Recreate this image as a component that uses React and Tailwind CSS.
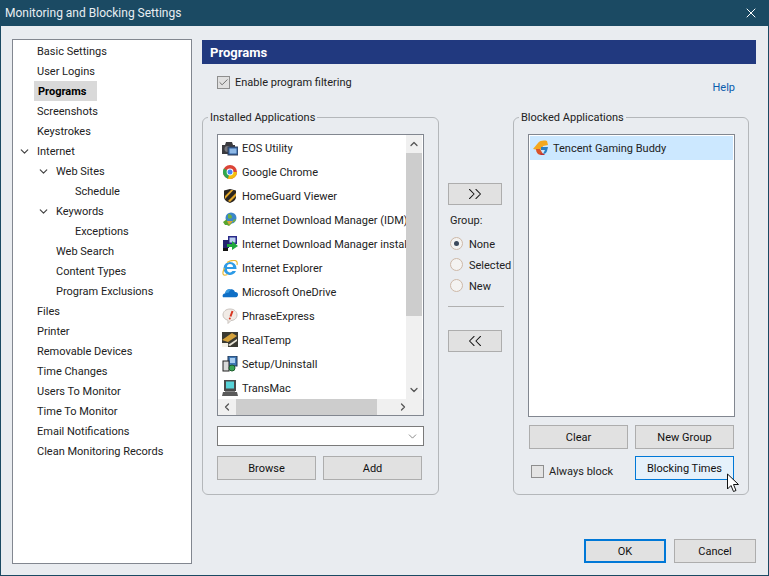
import React from "react";
import { X, ChevronDown, ChevronUp, ChevronLeft, ChevronRight, ChevronsLeft, ChevronsRight, Check } from "lucide-react";

const treeItems = [
  { label: "Basic Settings", indent: 0 },
  { label: "User Logins", indent: 0 },
  { label: "Programs", indent: 0, selected: true },
  { label: "Screenshots", indent: 0 },
  { label: "Keystrokes", indent: 0 },
  { label: "Internet", indent: 0, open: true },
  { label: "Web Sites", indent: 1, open: true },
  { label: "Schedule", indent: 2 },
  { label: "Keywords", indent: 1, open: true },
  { label: "Exceptions", indent: 2 },
  { label: "Web Search", indent: 1 },
  { label: "Content Types", indent: 1 },
  { label: "Program Exclusions", indent: 1 },
  { label: "Files", indent: 0 },
  { label: "Printer", indent: 0 },
  { label: "Removable Devices", indent: 0 },
  { label: "Time Changes", indent: 0 },
  { label: "Users To Monitor", indent: 0 },
  { label: "Time To Monitor", indent: 0 },
  { label: "Email Notifications", indent: 0 },
  { label: "Clean Monitoring Records", indent: 0 },
];

// app icons, drawn small
const EosIcon = () => (
  <svg width="16" height="16" viewBox="0 0 16 16">
    <path d="M0 5h3l1-3h6l1 3h2v9H0z" fill="#3b3b3f" />
    <circle cx="5.500" cy="9" r="3" fill="#77777c" />
    <rect x="6" y="7" width="10" height="8" fill="#2f5f9e" stroke="#33415a" />
    <rect x="7.500" y="8.500" width="7" height="5" fill="#8db8e6" />
  </svg>
);
const ChromeIcon = () => (
  <svg width="16" height="16" viewBox="0 0 16 16">
    <circle cx="8" cy="8" r="7" fill="#db4437" />
    <path d="M8 8 1.900 4.500A7 7 0 0 0 6 14.700z" fill="#2fa84f" />
    <path d="M8 8h7a7 7 0 0 1-9 6.700z" fill="#f4c20d" />
    <circle cx="8" cy="8" r="3.400" fill="#fff" />
    <circle cx="8" cy="8" r="2.500" fill="#4285f4" />
  </svg>
);
const GuardIcon = () => (
  <svg width="16" height="16" viewBox="0 0 16 16">
    <path d="M2 2.500 8 1l6 1.500V9c0 3-3 5-6 6-3-1-6-3-6-6z" fill="#2b2620" />
    <path d="M3 8l6-6h2.500L3 11zM6 13l8-8v3l-6 6z" fill="#e2a72c" />
  </svg>
);
const IdmIcon = () => (
  <svg width="16" height="16" viewBox="0 0 16 16">
    <circle cx="9" cy="6" r="5.500" fill="#3c86c9" />
    <path d="M6 2c2 0 4 1 4 3s-3 2-4 1zM11 8l3-1c-.5 2-2 3.500-3 3.500z" fill="#6fb03f" />
    <path d="M1 10l4-3v2h5v2l-3 3-2-1H3z" fill="#58a630" />
    <path d="M5 9h6l-4 4z" fill="#d9a441" />
  </svg>
);
const InstallerIcon = () => (
  <svg width="16" height="16" viewBox="0 0 16 16">
    <rect x="6" y="0" width="9" height="8" fill="#2a2a8a" />
    <rect x="7.500" y="1.500" width="6" height="5" fill="#bcd0f0" />
    <rect x="1" y="4" width="6" height="8" fill="#23236e" />
    <rect x="1" y="12" width="5" height="3" fill="#111" />
    <path d="M5 8h5V5l6 5-6 4v-3H5z" fill="#1fa83c" />
  </svg>
);
const IeIcon = () => (
  <svg width="16" height="16" viewBox="0 0 16 16">
    <path d="M8 2a6.500 6.500 0 1 0 6 9h-3.500a3 3 0 0 1-5.500-2H14.500A6.500 6.500 0 0 0 8 2zM5 7a3 3 0 0 1 6 0z" fill="#2e9be6" />
    <path d="M2.500 8C-.5 14 1 16.500 5.500 14.500M5 2.500C10-.5 16.500-1 15 5" fill="none" stroke="#e8b93a" strokeWidth="1.200" />
  </svg>
);
const OneDriveIcon = () => (
  <svg width="16" height="16" viewBox="0 1 15.500 13">
    <path d="M1 12.500c-1-1.500 0-3.500 2-3.500 0-3 3-5 5.500-4 1.500-.5 3.500.5 4 2.500 2-.2 3 1 3 2.500s-.7 2.500-2 2.500z" fill="#0f6fc6" />
    <path d="M3 9c0-3 3-5 5.500-4L6 8.500C5 8 4 8.300 3 9z" fill="#3a9be0" />
  </svg>
);
const PhraseIcon = () => (
  <svg width="16" height="16" viewBox="0 0 16 16">
    <path d="M8 1c4 0 7 2.500 7 6s-3 5.500-6 5.500L6 15.500V12.300C3 11.500 1 9.500 1 7c0-3.500 3-6 7-6z" fill="#f1ebe6" stroke="#c9c3be" />
    <path d="M10.500 3 8.500 8.500" stroke="#d8341f" strokeWidth="2" />
    <circle cx="7.800" cy="10.500" r="1" fill="#d8341f" />
  </svg>
);
const RealTempIcon = () => (
  <svg width="16" height="16" viewBox="0 0 16 16">
    <rect x="0" y="0" width="16" height="15" fill="#3a3a32" />
    <path d="M0 8 10 1l5 3-9 6z" fill="#d4a23c" />
    <path d="M6 13l9-6v2l-7 5z" fill="#e9e5d8" />
    <path d="M0 11h6v4H0z" fill="#f3f0e6" />
  </svg>
);
const SetupIcon = () => (
  <svg width="16" height="16" viewBox="0 0 16 16">
    <rect x="6" y="0" width="9" height="10" fill="#3f78b5" stroke="#1e3350" />
    <rect x="8" y="2" width="5" height="5" fill="#a8cdf0" />
    <rect x="1" y="5" width="6" height="10" fill="#d9d9d9" stroke="#222" />
    <circle cx="10" cy="12" r="3" fill="#3aa655" stroke="#1b5c2b" />
  </svg>
);
const TransMacIcon = () => (
  <svg width="16" height="16" viewBox="0 0 16 16">
    <rect x="2" y="0" width="12" height="11" fill="#4a4a4a" />
    <rect x="4" y="1.500" width="8" height="7" fill="#58d3d8" />
    <path d="M1 12h14l1 4H0z" fill="#5a5a5a" />
    <rect x="3" y="11" width="10" height="1" fill="#8a8a8a" />
  </svg>
);
const TencentIcon = () => (
  <svg width="16" height="16" viewBox="0 0 16 16">
    <path d="M0 9 5 3c2-2.500 6-3 9-2l1 4-5 1-1 3-4 1z" fill="#f4a81f" />
    <path d="M3 9c0 3 2 6 5 6l2-1-3-5z" fill="#d9542b" />
    <path d="M8 7h7l-1 4c-.5 2-2 3-4 3l1-2 1-2H8z" fill="#2b7fc4" />
    <path d="M7 13l4 1 1 1H8z" fill="#b8303a" />
  </svg>
);

const installed = [
  { name: "EOS Utility", Icon: EosIcon },
  { name: "Google Chrome", Icon: ChromeIcon },
  { name: "HomeGuard Viewer", Icon: GuardIcon },
  { name: "Internet Download Manager (IDM)", Icon: IdmIcon },
  { name: "Internet Download Manager installer", Icon: InstallerIcon },
  { name: "Internet Explorer", Icon: IeIcon },
  { name: "Microsoft OneDrive", Icon: OneDriveIcon },
  { name: "PhraseExpress", Icon: PhraseIcon },
  { name: "RealTemp", Icon: RealTempIcon },
  { name: "Setup/Uninstall", Icon: SetupIcon },
  { name: "TransMac", Icon: TransMacIcon },
];

const Btn = ({ children, className = "" }) => (
  <button className={`flex items-center justify-center border border-[#adadad] bg-[#e1e1e1] text-[#111] ${className}`}>
    {children}
  </button>
);

const Label = ({ children }) => <span className="mt-[2px]">{children}</span>;

const Radio = ({ label, checked }) => (
  <div className="flex h-[21px] items-center gap-[6px] whitespace-nowrap">
    <div className="flex h-[13px] w-[13px] shrink-0 items-center justify-center rounded-full border border-[#cdb8a8] bg-[#f4f3f1]">
      {checked && <div className="h-[5px] w-[5px] rounded-full bg-[#3d4a5c]" />}
    </div>
    <Label>{label}</Label>
  </div>
);

const App = () => {
  return (
    <div
      className="flex h-[576px] w-[769px] flex-col overflow-hidden bg-[#1b4a63] px-[1px] pb-[1px] text-[11px] leading-[16px] text-[#222]"
      style={{ fontFamily: 'Roboto, sans-serif' }}
    >
      {/* Title bar */}
      <div className="flex h-[26px] items-center justify-between pl-[4px] pr-[9px] text-[12px] text-[#e8eef2]">
        <span>Monitoring and Blocking Settings</span>
        <X size={16} strokeWidth={1.5} className="text-white" />
      </div>

      <div className="relative flex flex-1 bg-[#e9ecf0] pl-[11px]">
        {/* Tree */}
        <div className="mt-[13px] h-[525px] w-[180px] border border-[#828790] bg-white pt-[1px]">
          {treeItems.map((item) => (
            <div key={item.label} className="flex h-[20px] items-center" style={{ paddingLeft: 5 + item.indent * 19 }}>
              <div className="flex w-[15px] justify-start">
                {item.open && <ChevronDown size={13} strokeWidth={2.25} className="text-[#444]" />}
              </div>
              {item.selected ? (
                <span className="ml-[1px] flex h-[20px] w-[63px] items-center bg-[#d9d9d9] pl-[4px] pt-[2px] font-bold text-black">
                  {item.label}
                </span>
              ) : (
                <div className="ml-[4px] mt-[2px]">{item.label}</div>
              )}
            </div>
          ))}
        </div>

        {/* Right side */}
        <div className="ml-[10px] flex w-[554px] flex-col pt-[14px]">
          <div className="flex h-[24px] items-center bg-[#21397f] pl-[8px] pt-[2px] text-[13px] font-bold text-white">Programs</div>

          <div className="flex h-[45px] justify-between pl-[15px] pr-[21px]">
            <div className="flex h-[36px] items-center gap-[5px]">
              <div className="flex h-[13px] w-[13px] items-center justify-center border border-[#8e8e8e] bg-[#e0e0e0]">
                <Check size={11} strokeWidth={2} className="text-[#666]" />
              </div>
              <Label>Enable program filtering</Label>
            </div>
            <a className="mt-[16px] text-[#0b5cad]">Help</a>
          </div>

          <div className="flex items-start">
            {/* Installed */}
            <fieldset className="h-[386px] w-[237px] rounded-[6px] border border-[#b4b7ba] pl-[14px]">
              <legend className="-ml-[9px] h-[16px] px-[2px] pt-[1px]">Installed Applications</legend>
              <div className="mt-[9px] flex h-[282px] w-[207px] flex-col border border-[#828790] bg-white">
                <div className="flex min-h-0 flex-1">
                  <div className="w-[188px] overflow-hidden pt-[1px]">
                    {installed.map(({ name, Icon }) => (
                      <div key={name} className="flex h-[24px] items-center gap-[4px] whitespace-nowrap pl-[4px]">
                        <div className="h-[16px] w-[16px] shrink-0"><Icon /></div>
                        <Label>{name}</Label>
                      </div>
                    ))}
                  </div>
                  <div className="flex w-[16px] flex-col bg-[#f0f0f0]">
                    <div className="flex h-[18px] items-center justify-center"><ChevronUp size={12} strokeWidth={2.5} className="text-[#555]" /></div>
                    <div className="h-[163px] bg-[#cdcdcd]" />
                    <div className="flex-1" />
                    <div className="flex h-[18px] items-center justify-center"><ChevronDown size={12} strokeWidth={2.5} className="text-[#555]" /></div>
                  </div>
                </div>
                <div className="flex h-[16px] items-stretch bg-[#f0f0f0]">
                  <div className="flex w-[18px] items-center justify-center"><ChevronLeft size={12} strokeWidth={2.5} className="text-[#555]" /></div>
                  <div className="w-[141px] bg-[#cdcdcd]" />
                  <div className="flex-1" />
                  <div className="flex w-[18px] items-center justify-center"><ChevronRight size={12} strokeWidth={2.5} className="text-[#555]" /></div>
                  <div className="w-[11px]" />
                </div>
              </div>
              <div className="mt-[10px] flex h-[20px] w-[207px] items-center justify-end border border-[#7a7a7a] bg-white pr-[4px]">
                <ChevronDown size={13} strokeWidth={1.25} className="text-[#555]" />
              </div>
              <div className="mt-[10px] flex gap-[7px]">
                <Btn className="h-[24px] w-[99px]"><Label>Browse</Label></Btn>
                <Btn className="h-[24px] w-[99px]"><Label>Add</Label></Btn>
              </div>
            </fieldset>

            {/* Move buttons */}
            <div className="ml-[9px] flex w-[56px] flex-col pt-[74px]">
              <Btn className="h-[22px] w-[54px]"><ChevronsRight size={22} strokeWidth={1.1} /></Btn>
              <div className="mt-[8px] pl-[2px]">Group:</div>
              <div className="mt-[4px] flex flex-col pl-[2px]">
                <Radio label="None" checked />
                <Radio label="Selected" />
                <Radio label="New" />
              </div>
              <div className="mt-[10px] h-[1px] w-[56px] bg-[#b0b0b0]" />
              <Btn className="mt-[23px] h-[22px] w-[54px]"><ChevronsLeft size={22} strokeWidth={1.1} /></Btn>
            </div>

            {/* Blocked */}
            <fieldset className="ml-[9px] h-[386px] w-[236px] rounded-[6px] border border-[#b4b7ba] pl-[14px]">
              <legend className="-ml-[9px] h-[16px] px-[2px] pt-[1px]">Blocked Applications</legend>
              <div className="mt-[9px] h-[283px] w-[207px] border border-[#828790] bg-white p-[1px]">
                <div className="flex h-[24px] items-center gap-[4px] bg-[#cce8ff] pl-[3px]">
                  <TencentIcon />
                  <Label>Tencent Gaming Buddy</Label>
                </div>
              </div>
              <div className="mt-[8px] flex gap-[7px] pl-[1px]">
                <Btn className="h-[24px] w-[99px]"><Label>Clear</Label></Btn>
                <Btn className="h-[24px] w-[99px]"><Label>New Group</Label></Btn>
              </div>
              <div className="mt-[7px] flex items-start pl-[3px]">
                <div className="mt-[6px] flex w-[104px] items-center gap-[5px]">
                  <div className="h-[13px] w-[13px] border border-[#8e8e8e] bg-[#e4e4e4]" />
                  <Label>Always block</Label>
                </div>
                <button className="flex h-[24px] w-[99px] items-center justify-center border border-[#0078d7] bg-[#e5f1fb] text-[#111]">
                  <Label>Blocking Times</Label>
                </button>
              </div>
            </fieldset>
          </div>

          <div className="mt-[44px] flex justify-end gap-[8px]">
            <Btn className="h-[24px] w-[82px] border-2 !border-[#0078d7]"><Label>OK</Label></Btn>
            <Btn className="h-[24px] w-[82px]"><Label>Cancel</Label></Btn>
          </div>
        </div>

        {/* Mouse pointer */}
        <svg className="absolute left-[725px] top-[447px]" width="14" height="21" viewBox="0 0 14 21">
          <path d="M1.500 1v15l3.500-3.500 2.500 6 2.500-1-2.500-6h5z" fill="#fff" stroke="#111" strokeWidth="1" />
        </svg>
      </div>
    </div>
  );
};

export default App;
